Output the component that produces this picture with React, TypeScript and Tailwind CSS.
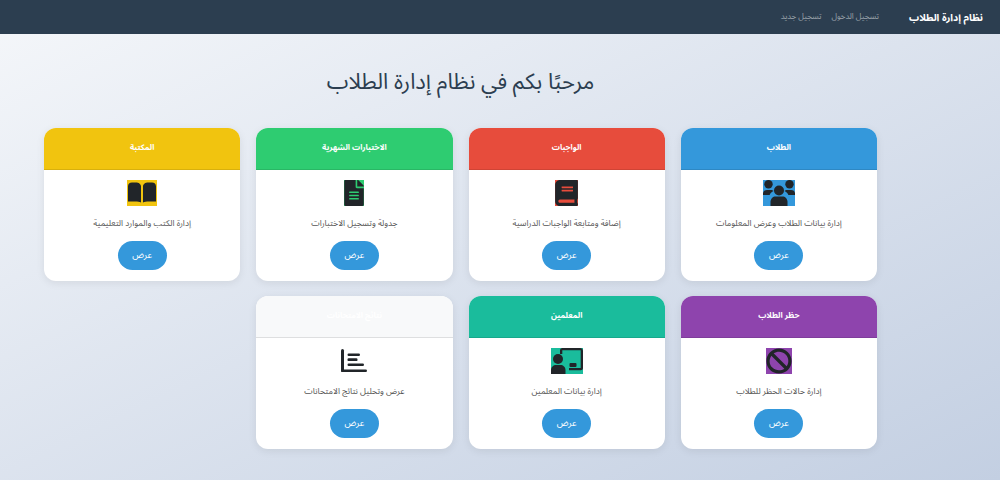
import { FC, ReactNode } from 'react';
import { FaBan, FaBook, FaFileAlt } from 'react-icons/fa';

interface ICard {
  title: string;
  text: string;
  header: string;
  icon: ReactNode;
}

const glyph = 'h-[26px] w-auto text-[#212529]';

// svg icons for the ones the packages draw differently
const UsersIcon = () => (
  <svg viewBox="0 0 32 26" className={glyph} fill="currentColor">
    <circle cx="5.5" cy="4.2" r="4.2" />
    <circle cx="26.5" cy="4.2" r="4.2" />
    <path d="M0 15v-1.5C0 11 2 10 4 10h4c1 0 2 .5 2.6 1-2 1-3.4 2.2-4 4z" />
    <path d="M32 15v-1.5c0-2.500-2-3.500-4-3.500h-4c-1 0-2 .5-2.600 1 2 1 3.400 2.200 4 4z" />
    <circle cx="16" cy="10.500" r="5" />
    <path d="M7.500 26v-4c0-3.500 2.500-5.500 5-5.500h7c2.500 0 5 2 5 5.500v4z" />
  </svg>
);

const BookIcon = () => (
  <svg viewBox="0 0 30 26" className={glyph} fill="currentColor">
    <path d="M1 6.500C1 4 2.500 2.500 5 2.500h4c2.500 0 5 1.500 5 4V22.500c-1.500-.8-3.500-1-5.500-1H1z" />
    <path d="M29 6.500C29 4 27.500 2.500 25 2.500h-4c-2.500 0-5 1.500-5 4V22.500c1.500-.8 3.500-1 5.500-1H29z" />
  </svg>
);

const TeacherIcon = () => (
  <svg viewBox="0 0 32 26" className={glyph} fill="currentColor">
    <path d="M9 6V2.500C9 1 10 0 11.500 0H29c1.700 0 3 1.300 3 3v17c0 1.300-1 2.300-2.300 2.300H18v-2.300h11.700V2.300H11.300V6z" />
    <rect x="18.500" y="15" width="7" height="4" rx="1" />
    <circle cx="7" cy="11" r="5" />
    <path d="M0 26v-4c0-3 2.500-5 5-5h4.500c2.500 0 5 2 5 5v4z" />
  </svg>
);

const ChartIcon = () => (
  <svg viewBox="0 0 26 24" className="h-[24px] w-auto text-[#212529]" fill="currentColor">
    <rect x="0" y="0" width="3" height="23" rx="1.500" />
    <rect x="0" y="20.500" width="26" height="2.600" rx="1.300" />
    <rect x="6.500" y="4.500" width="12.500" height="2.400" rx="1.200" />
    <rect x="6.500" y="9.300" width="10" height="2.800" rx="1.200" />
    <rect x="6.500" y="14.500" width="16.500" height="2.400" rx="1.200" />
  </svg>
);

const cards: ICard[] = [
  { title: 'الطلاب', text: 'إدارة بيانات الطلاب وعرض المعلومات', header: 'bg-[#3498db]', icon: <UsersIcon /> },
  { title: 'الواجبات', text: 'إضافة ومتابعة الواجبات الدراسية', header: 'bg-[#e74c3c]', icon: <FaBook className="h-[26px] w-[23px] text-[#212529]" /> },
  { title: 'الاختبارات الشهرية', text: 'جدولة وتسجيل الاختبارات', header: 'bg-[#2ecc71]', icon: <FaFileAlt className="h-[26px] w-[20px] text-[#212529]" /> },
  { title: 'المكتبة', text: 'إدارة الكتب والموارد التعليمية', header: 'bg-[#f1c40f]', icon: <BookIcon /> },
  { title: 'حظر الطلاب', text: 'إدارة حالات الحظر للطلاب', header: 'bg-[#8e44ad]', icon: <FaBan className={glyph} /> },
  { title: 'المعلمين', text: 'إدارة بيانات المعلمين', header: 'bg-[#1abc9c]', icon: <TeacherIcon /> },
  { title: 'نتائج الامتحانات', text: 'عرض وتحليل نتائج الامتحانات', header: 'bg-[#f8f9fa]', icon: <ChartIcon /> },
];

const Card: FC<{ card: ICard }> = ({ card }) => {
  const { title, text, header, icon } = card;
  return (
    <div className="h-[153px] overflow-hidden rounded-[12px] bg-white shadow-[0_2px_8px_rgba(0,0,0,0.08)]">
      <div className={`flex h-[42px] items-center justify-center border-b border-black/10 pb-[2px] text-[8px] font-bold text-white ${header}`}>
        {title}
      </div>
      <div className="flex flex-col items-center pt-[10px]">
        <span className={`flex h-[26px] items-center ${header === 'bg-[#f8f9fa]' ? '' : header}`}>{icon}</span>
        <p className="mt-[9px] h-[16px] text-[8.5px] leading-[16px] text-[#555]">{text}</p>
        <button className="mt-[10px] h-[29px] w-[49px] rounded-full bg-[#3498db] text-[9px] text-white">عرض</button>
      </div>
    </div>
  );
};

const App: FC = () => {
  return (
    <div dir="rtl" className="h-[480px] w-[1000px] overflow-hidden bg-gradient-to-br from-[#f5f7fa] to-[#c3cfe2] font-['Noto_Sans_Arabic','DejaVu_Sans',sans-serif]">
      <nav className="flex h-[34px] items-center bg-[#2c3e50] pr-[17px]">
        <span className="ml-[30px] text-[10px] font-bold text-white">نظام إدارة الطلاب</span>
        <a className="ml-[10px] text-[8px] text-white/50">تسجيل الدخول</a>
        <a className="text-[8px] text-white/50">تسجيل جديد</a>
      </nav>
      <main className="mr-[123px] w-[833px]">
        <h1 className="mt-[30px] h-[36px] text-center text-[22px] leading-[36px] text-[#2c3e50]">مرحبًا بكم في نظام إدارة الطلاب</h1>
        <div className="mt-[28px] grid grid-cols-4 gap-x-4 gap-y-[15px]">
          {cards.map((card) => (
            <Card key={card.title} card={card} />
          ))}
        </div>
      </main>
    </div>
  );
};

export default App;
